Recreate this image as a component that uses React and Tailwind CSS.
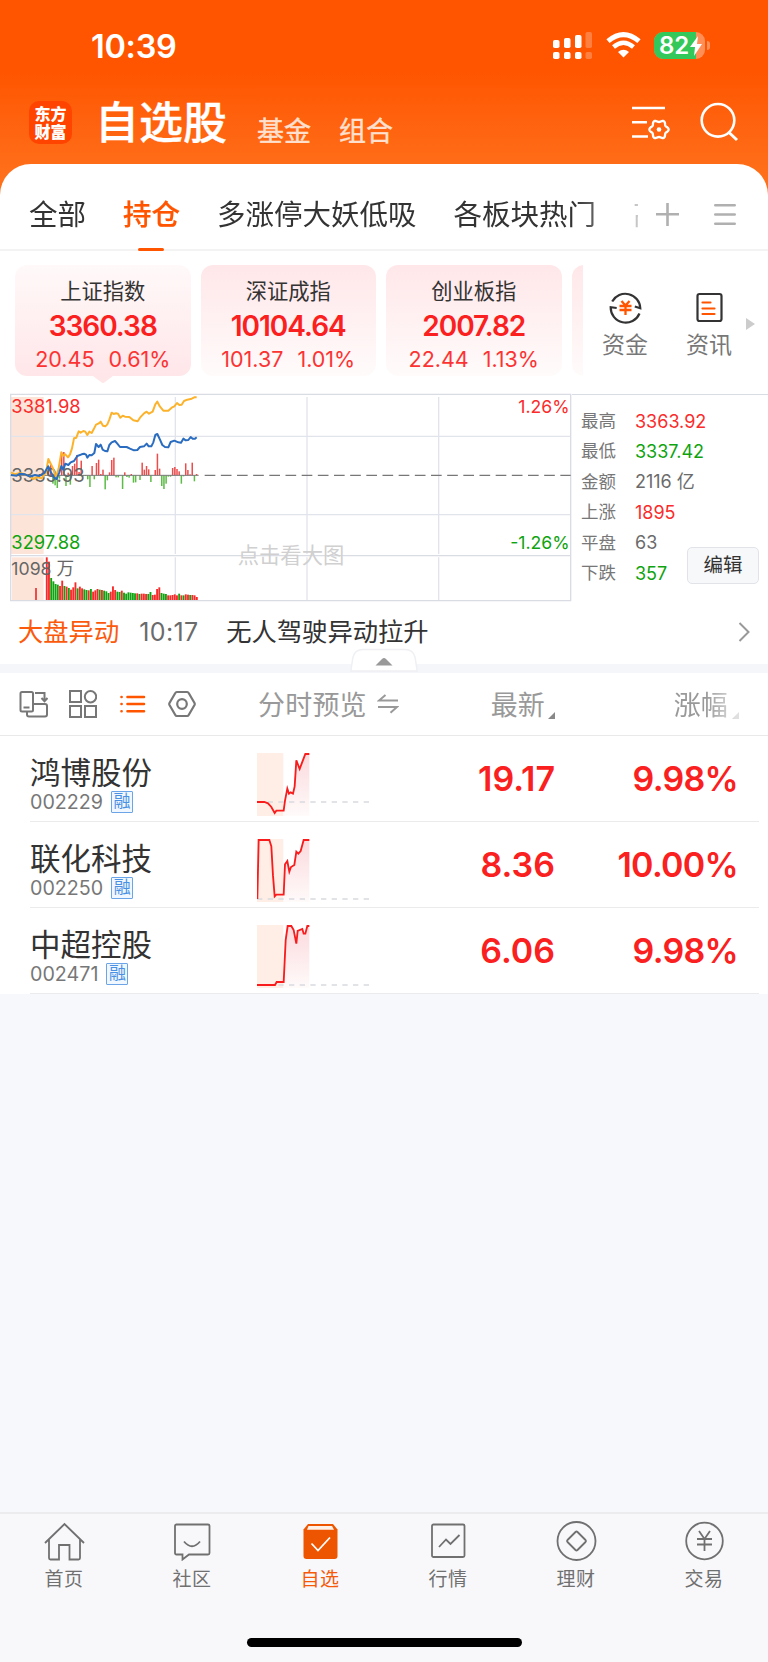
import React, { useState } from "react";

const groups = ["全部", "持仓", "多涨停大妖低吸", "各板块热门", "高股息"];

const indexes = [
  { name: "上证指数", value: "3360.38", change: "20.45", percent: "0.61%" },
  { name: "深证成指", value: "10104.64", change: "101.37", percent: "1.01%" },
  { name: "创业板指", value: "2007.82", change: "22.44", percent: "1.13%" },
];

const stats = [
  { label: "最高", value: "3363.92", color: "text-[#fb2b2b]" },
  { label: "最低", value: "3337.42", color: "text-[#0fa30f]" },
  { label: "金额", value: "2116 亿", color: "text-[#6b6b6b]" },
  { label: "上涨", value: "1895", color: "text-[#fb2b2b]" },
  { label: "平盘", value: "63", color: "text-[#6b6b6b]" },
  { label: "下跌", value: "357", color: "text-[#0fa30f]" },
];

const stocks = [
  {
    name: "鸿博股份",
    code: "002229",
    price: "19.17",
    percent: "9.98%",
    base: 147,
    line: "0,147 22,147 33,151 43,162 53,180 58,173 80,173 84,143 91,107 96,122 101,118 108,122 113,100 118,22 128,48 134,32 145,3 157,3",
    area: "80,173 84,143 91,107 96,122 101,118 108,122 113,100 118,22 128,48 134,32 145,3 157,3 157,188 80,188",
  },
  {
    name: "联化科技",
    code: "002250",
    price: "8.36",
    percent: "10.00%",
    base: 180,
    line: "1,180 5,3 37,3 43,22 48,110 53,172 58,167 80,167 84,76 91,66 97,98 102,84 112,78 118,38 124,44 131,36 140,3 157,3",
    area: "80,167 84,76 91,66 97,98 102,84 112,78 118,38 124,44 131,36 140,3 157,3 157,188 80,188",
  },
  {
    name: "中超控股",
    code: "002471",
    price: "6.06",
    percent: "9.98%",
    base: 180,
    line: "0,180 54,180 59,171 80,171 86,45 92,3 103,3 110,15 118,56 122,18 136,12 140,26 145,26 151,3 157,3",
    area: "80,171 86,45 92,3 103,3 110,15 118,56 122,18 136,12 140,26 145,26 151,3 157,3 157,188 80,188",
  },
];

const yellowLine =
  "33,262 45,268 60,264 75,268 90,275 100,282 112,276 125,280 133,268 138,262 145,222 158,248 168,276 176,250 184,202 190,212 196,208 204,217 210,208 216,190 222,160 229,158 236,139 242,143 250,138 256,140 262,150 268,140 275,144 281,133 288,119 295,116 302,110 309,122 316,124 322,118 328,104 335,83 341,87 348,85 354,86 361,98 368,92 375,95 388,96 400,106 413,109 420,98 432,85 440,80 447,86 458,80 466,58 472,50 480,65 490,77 505,77 515,68 523,64 531,54 538,60 545,59 552,48 562,44 575,41 583,37 590,37";
const blueLine =
  "33,270 50,272 60,266 75,268 90,275 105,270 118,273 133,264 145,244 152,260 162,278 170,282 178,262 184,243 190,254 196,236 205,240 212,232 222,228 232,213 245,208 252,206 258,209 262,218 268,210 275,211 283,204 288,177 296,186 302,179 308,194 315,198 322,199 328,180 335,172 345,168 352,176 360,186 380,186 390,191 402,196 412,195 420,186 432,184 440,176 446,184 454,184 460,172 466,150 472,147 480,164 487,180 495,186 505,187 512,171 523,167 535,172 543,173 550,161 557,166 565,165 572,156 578,161 585,161 590,157";

// minute momentum, positive is above the previous close
const momentum = [
  18, 32, -25, -30, -38, -10, 61, 70, -32, 8, -28, 28, 35, 61, 10, 44, -3, -2, -12, -35, 28, -12, 37, 47, 4, 17, -42,
  -15, 9, 46, 53, -6, -6, 0, -41, 9, -5, -7, 4, -22, -21, 0, -14, 38, 17, 28, 18, -20, 0, 16, 65, 20, -32, -41, -25,
  -4, -4, 22, 25, 19, 12, -25, -3, 36, 16, 3, 38, -18, 4,
];

// negative is drawn red
const volumes = [
  -128, -115, 66, 56, 48, 46, -42, -58, 42, -40, 36, -31, -38, -53, 35, -40, -35, 32, 30, -29, 33, -25, -29, -33, 31,
  -30, 28, 26, 21, -25, -41, -30, 25, 24, -28, 22, 19, 23, 22, 21, 20, -20, 18, -19, -19, -18, 18, 24, -15, -16, -33,
  -38, 21, 19, 18, -14, -14, -15, -17, -14, 19, -14, 14, -17, -16, 15, -15, -14, -9,
];

// six soft lobes round the centre
const gear = Array.from({ length: 72 }, (_, i) => {
  const a = (i * Math.PI) / 36;
  const r = 8.5 + 1.1 * Math.cos(6 * a);
  return `${27 + r * Math.cos(a)},${24.5 + r * Math.sin(a)}`;
}).join(" ");

const StatusBar = () => (
  <div className="h-[92px] flex justify-between items-start text-white pl-[91px] pr-[58px]">
    <span className="mt-[31px] text-[32.500px] leading-8 font-semibold tracking-[-0.3px]">10:39</span>
    <div className="flex mt-8">
      <svg width="39" height="27" viewBox="0 0 39 27" fill="white">
        <rect x="0" y="8" width="6.5" height="8" rx="1.8" />
        <rect x="11" y="6" width="6.5" height="10" rx="1.8" />
        <rect x="22" y="3" width="6.5" height="13" rx="1.8" />
        <rect x="32.500" y="0" width="6.5" height="16" rx="1.8" opacity=".25" />
        <rect x="0" y="20" width="6.5" height="7" rx="1.8" />
        <rect x="11" y="20" width="6.5" height="7" rx="1.8" />
        <rect x="22" y="20" width="6.5" height="7" rx="1.8" />
        <rect x="32.500" y="20" width="6.5" height="7" rx="1.8" opacity=".25" />
      </svg>
      <svg className="ml-[14px]" width="35" height="27" viewBox="0 0 35 27" fill="none" stroke="white">
        <path d="M2 9.200Q17.500-4 33 9.200" strokeWidth="5" />
        <path d="M7.500 15Q17.500 6.500 27.500 15" strokeWidth="4.500" />
        <path d="M17.500 25.500L12 20Q17.500 15.500 23 20Z" fill="white" stroke="none" />
      </svg>
      <div className="ml-[13px] relative w-[51px] h-[27px] rounded-[9px] bg-[#ff8f57] overflow-hidden">
        <div className="w-[42px] h-full bg-[#34c759]" />
        <span className="absolute left-[5px] top-0 text-[24px] leading-[27px] font-semibold">82</span>
        <svg className="absolute left-9 top-1" width="12" height="20" viewBox="0 0 12 20" fill="white">
          <path d="M8 0L0 11h5L4 20 12 8H7z" />
        </svg>
      </div>
      <div className="ml-[2px] mt-[9px] w-[3px] h-[9px] rounded-r-full bg-[#ff8f57]" />
    </div>
  </div>
);

const Header = () => (
  <div className="flex h-[72px] pl-[29px] pr-[29px] text-white">
    <div className="mt-[9px] w-[43px] h-[43px] rounded-[10px] bg-[#ff4400] flex flex-col items-center justify-center text-[16px] leading-[18px] font-black">
      <span>东方</span>
      <span>财富</span>
    </div>
    <h1 className="ml-[23px] mt-[8px] text-[44px] leading-[46px] font-medium [-webkit-text-stroke:0.3px_white]">自选股</h1>
    <span className="ml-[30px] mt-[25px] text-[27px] leading-[30px] text-[#ffe0cf] [-webkit-text-stroke:0.4px_#ffe0cf]">基金</span>
    <span className="ml-[28px] mt-[25px] text-[27px] leading-[30px] text-[#ffe0cf] [-webkit-text-stroke:0.4px_#ffe0cf]">组合</span>
    <svg className="ml-auto mt-[13px]" width="39" height="36" viewBox="0 0 39 36" fill="none" stroke="white" strokeWidth="2.600">
      <path d="M0 3h33M0 17.300h15M0 31.500h16" />
      <polygon points={gear} strokeWidth="2.300" strokeLinejoin="round" />
      <circle cx="27" cy="24.500" r="2.300" fill="white" stroke="none" />
    </svg>
    <svg className="ml-[29px] mt-[10px]" width="39" height="40" viewBox="0 0 39 40" fill="none" stroke="white" strokeWidth="2.600">
      <circle cx="18" cy="18.300" r="16.300" />
      <path d="M28.500 30l8.500 8" strokeWidth="3" />
    </svg>
  </div>
);

const GroupTabs = ({ active, onChange }) => (
  <div className="flex h-[87px] border-b-2 border-[#f3f3f4]">
    <div className="flex gap-[37px] w-[638px] h-[87px] pl-[29px] overflow-hidden whitespace-nowrap [mask-image:linear-gradient(to_right,black_575px,transparent_660px)]">
      {groups.map((g) => (
        <button
          key={g}
          onClick={() => onChange(g)}
          className={`relative shrink-0 pt-[35px] flex flex-col text-[28.500px] leading-8 ${
            active === g ? "text-[#ff5500] font-medium [-webkit-text-stroke:0.2px_#ff5500]" : "text-[#333]"
          }`}
        >
          {g}
          {active === g && <span className="absolute bottom-0 left-[15px] w-[26px] h-[3px] rounded bg-[#ff5500]" />}
        </button>
      ))}
    </div>
    <svg className="ml-[18px] mt-[38px] shrink-0" width="23" height="24" viewBox="0 0 23 24" stroke="#b0b0b0" strokeWidth="2.600">
      <path d="M0 12.300h23M11.500 1v23" />
    </svg>
    <svg className="ml-[35px] mt-[38px] shrink-0" width="22" height="24" viewBox="0 0 22 24" stroke="#b0b0b0" strokeWidth="2.600" strokeLinecap="round">
      <path d="M1.300 3.200h19.400M1.300 12.500h19.400M1.300 21.800h19.400" />
    </svg>
  </div>
);

const IndexCards = () => (
  <div className="flex h-[142px] pt-[14px] pl-[15px]">
    <div className="flex gap-[10px] w-[568px] h-[128px] overflow-hidden">
      {indexes.map((item, i) => (
        <div key={item.name} className="shrink-0 w-[175.500px]">
          <div
            className={`h-[111px] rounded-xl flex flex-col items-center ${
              i === 0 ? "bg-linear-to-b from-[#fff9f9] to-[#ffe6e9]" : "bg-linear-to-b from-[#ffe7e9] to-[#fffbfb]"
            }`}
          >
            <span className="mt-[13px] text-[21.300px] leading-[26px] text-[#333]">{item.name}</span>
            <span className="mt-[7px] text-[28px] leading-[30px] font-semibold tracking-[-1px] text-[#fb2020]">{item.value}</span>
            <div className="mt-[6px] flex gap-[14px] text-[21.500px] leading-6 text-[#fb3333]">
              <span>{item.change}</span>
              <span>{item.percent}</span>
            </div>
          </div>
          {i === 0 && (
            <svg className="mx-auto" width="20" height="7" viewBox="0 0 20 7">
              <path d="M0 0h20l-8 6q-2 2-4 0z" fill="#ffe6e9" />
            </svg>
          )}
        </div>
      ))}
      <div className="shrink-0 w-10 h-[111px] rounded-xl bg-linear-to-b from-[#ffe7e9] to-[#fffbfb]" />
    </div>
    <div className="ml-[18px] w-[48px] flex flex-col items-center">
      <svg className="mt-[26px]" width="33" height="33" viewBox="0 0 33 33" fill="none" stroke="#333" strokeWidth="2.200">
        <path d="M3.200 10.500A15 15 0 0 1 31.300 17.200L25.800 15.500" />
        <path d="M30.500 22.500A15 15 0 0 1 1.700 16.200L7.700 17" />
        <path d="M12.500 10l4 4.500 4-4.500M10.500 15h12M10.500 19h12M16.500 14.500V24" stroke="#ff5500" strokeWidth="2.300" />
      </svg>
      <span className="mt-[7px] text-[23px] leading-[28px] text-[#777] whitespace-nowrap">资金</span>
    </div>
    <div className="ml-[36px] w-[48px] flex flex-col items-center">
      <svg className="mt-[26px]" width="27" height="33" viewBox="0 0 27 33" fill="none" stroke="#333" strokeWidth="2.200">
        <rect x="1.500" y="3" width="24" height="27" rx="2" />
        <path d="M6.500 11.500h8M6.500 17.500h12M6.500 23h12" stroke="#ff5500" strokeWidth="2.200" strokeLinecap="round" />
      </svg>
      <span className="mt-[7px] text-[23px] leading-[28px] text-[#777] whitespace-nowrap">资讯</span>
    </div>
    <svg className="ml-[13px] mt-[53px]" width="9" height="12" viewBox="0 0 9 12" fill="#ccc">
      <path d="M0 0l9 6-9 6z" />
    </svg>
  </div>
);

const MarketChart = () => (
  <svg width="562" height="209" viewBox="30 24 1686 627" fill="none" fontSize="55">
    <rect x="33" y="36" width="98" height="471" fill="#fce5d8" />
    <rect x="36" y="517" width="95" height="128" fill="#fce5d8" />
    <g stroke="#e2e4ec" strokeWidth="4">
      <path d="M32 154H1712M32 389H1712M526 36V507M921 36V507M1316 36V507M526 517V646M921 517V646M1316 517V646" />
      <path d="M32 28H1712V647H32zM32 512H1712" stroke="#dadce3" />
    </g>
    <text x="873" y="534" fontSize="64" textAnchor="middle" className="fill-[#d0d0d0]">
      点击看大图
    </text>
    {momentum.map((m, i) => (
      <rect
        key={i}
        x={143.500 + i * 6.53}
        y={m > 0 ? 271 - m : 271}
        width="4.5"
        height={Math.abs(m)}
        fill={m > 0 ? "#ee4b4b" : "#5dbb46"}
      />
    ))}
    {volumes.map((v, i) => (
      <rect
        key={i}
        x={137.500 + i * 6.62}
        y={645 - Math.abs(v)}
        width="5.6"
        height={Math.abs(v)}
        fill={v < 0 ? "#fb2828" : "#0fa30f"}
      />
    ))}
    <rect x="105" y="609" width="6" height="36" fill="#ee4b4b" />
    <path d="M32 271H596" stroke="#777" strokeWidth="3" />
    <path d="M614 271H1712" stroke="#777" strokeWidth="4" strokeDasharray="32 16.500" />
    <g className="fill-[#666]">
      <text x="34" y="290" fontSize="55.500">3339.93</text>
      <text x="34" y="569" fontSize="53">1098 万</text>
    </g>
    <polyline points={yellowLine} stroke="#fcb32b" strokeWidth="6" strokeLinejoin="round" />
    <polyline points={blueLine} stroke="#2a6cc0" strokeWidth="6" strokeLinejoin="round" />
    <text x="34" y="84" className="fill-[#fb2b2b]">3381.98</text>
    <text x="34" y="492" className="fill-[#0fa30f]">3297.88</text>
    <text x="1709" y="84" fontSize="53" textAnchor="end" className="fill-[#fb2b2b]">1.26%</text>
    <text x="1709" y="492" fontSize="53" textAnchor="end" className="fill-[#0fa30f]">-1.26%</text>
  </svg>
);

const MarketPanel = () => (
  <div className="flex h-[209px] pl-[10px]">
    <MarketChart />
    <div className="relative flex-1 border-t border-[#dadce3] mt-[1px] pl-[9px] pt-[11px]">
      {stats.map((s) => (
        <div key={s.label} className="flex h-[30.400px] items-center text-[18px]">
          <span className="w-[54px] text-[17.500px] text-[#777]">{s.label}</span>
          <span className={s.color}>{s.value}</span>
        </div>
      ))}
      <button className="absolute right-[9px] top-[152px] w-[72px] h-[37px] rounded-[5px] border border-[#e1e3e9] bg-[#f7f8fa] text-[19.500px] text-[#333]">
        编辑
      </button>
    </div>
  </div>
);

const NewsBar = () => (
  <div className="relative h-[71px] border-b-[9px] border-[#f5f6fa] flex text-[25.300px] leading-[30px] pl-[18px] pt-[15px]">
    <span className="text-[#fb5a0c]">大盘异动</span>
    <span className="ml-5 text-[25px] text-[#6b6b6b] tracking-[0.4px] w-[87px]">10:17</span>
    <span className="text-[#333]">无人驾驶异动拉升</span>
    <svg className="ml-auto mr-[18px] mt-[5px]" width="12" height="20" viewBox="0 0 12 20" fill="none" stroke="#999" strokeWidth="2">
      <path d="M1.500 1l9 9-9 9" />
    </svg>
    <svg className="absolute left-[350px] top-[46px]" width="68" height="24" viewBox="0 0 68 24">
      <path d="M.8 23L3 9Q5 1.500 13 1.500H55Q63 1.500 65 9L67.200 23z" fill="white" stroke="#eff0f3" strokeWidth="1.500" />
      <path d="M25.500 17.500l6.500-6.500q2-2 4 0l6.500 6.500z" fill="#999" />
    </svg>
  </div>
);

const ListHeader = () => (
  <div className="flex items-center h-[63px] border-b border-[#e9e9ea] pl-[19px] text-[27px] text-[#999]">
    <svg width="29" height="28" viewBox="0 0 29 28" fill="none" stroke="#777" strokeWidth="2">
      <rect x="1.500" y="2" width="12.500" height="19.500" rx="1.500" />
      <path d="M4.500 17.500h6M16 3h9.500v8M22.500 8l3 3.200 3-3.200M8 22v2.500a2 2 0 0 0 2 2h16a2 2 0 0 0 2-2V16a2 2 0 0 0-2-2H14" />
    </svg>
    <svg className="ml-[21px]" width="28" height="28" viewBox="0 0 28 28" fill="none" stroke="#777" strokeWidth="2">
      <rect x="1" y="1" width="11" height="11" />
      <circle cx="21.500" cy="6.700" r="5.700" />
      <rect x="1" y="16" width="11" height="11" />
      <rect x="16" y="16" width="11" height="11" />
    </svg>
    <svg className="ml-[23px]" width="26" height="20" viewBox="0 0 26 20" stroke="#ff5500" strokeWidth="2.600" strokeLinecap="round">
      <path d="M7.500 3H24M7.500 10H24M7.500 17.200H24M1.500 3h.1M1.500 10h.1M1.500 17.200h.1" />
    </svg>
    <svg className="ml-[22px]" width="28" height="28" viewBox="0 0 28 28" fill="none" stroke="#777" strokeWidth="2.200">
      <path d="M8.800 2H19.200q1 0 1.500 1L26.500 13q.5 1 0 2L20.700 25q-.5 1-1.500 1H8.800q-1 0-1.500-1L1.500 15q-.5-1 0-2L7.300 3q.5-1 1.500-1z" />
      <circle cx="14" cy="14" r="4.800" />
    </svg>
    <span className="ml-[62px] mt-[4px] tracking-[0.2px]">分时预览</span>
    <svg className="ml-[10px]" width="22" height="20" viewBox="0 0 22 20" fill="none" stroke="#999" strokeWidth="2">
      <path d="M21 6.500H2L8.500 1M1 13H20L13.500 18.800" />
    </svg>
    <span className="ml-[92px] mt-[4px]">最新</span>
    <svg className="ml-[3px] mt-[22px]" width="7" height="7" viewBox="0 0 7 7" fill="#888">
      <path d="M7 0v7H0z" />
    </svg>
    <div className="ml-[119px] mt-[4px] flex items-center [mask-image:linear-gradient(to_right,black_32px,rgba(0,0,0,0.3)_62px)]">
      <span>涨幅</span>
      <svg className="ml-[4px] mt-[19px]" width="7" height="7" viewBox="0 0 7 7" fill="#999">
        <path d="M7 0v7H0z" />
      </svg>
    </div>
  </div>
);

const StockRow = ({ stock, index }) => (
  <div className="ml-[30px] mr-[9px] flex h-[86px] border-b border-[#ebebec]">
    <div className="w-[227px]">
      <p className="mt-[21px] text-[30.500px] leading-8 text-[#333]">{stock.name}</p>
      <div className="flex items-center h-6 mt-[1px]">
        <span className="text-[19.700px] leading-6 text-[#777]">{stock.code}</span>
        <span className="ml-2 w-[22px] h-[22px] border border-[#6ca4e8] bg-[#f0f7ff] text-[#4a90e2] text-[17px] leading-[19px] text-center rounded-[1px]">
          融
        </span>
      </div>
    </div>
    <svg className="mt-[17px]" width="115" height="64" viewBox="0 0 345 192" fill="none">
      <defs>
        <linearGradient id={`fade${index}`} x1="0" y1="0" x2="0" y2="1">
          <stop offset="0" stopColor="#fbdadd" />
          <stop offset="1" stopColor="#fffafa" />
        </linearGradient>
      </defs>
      <rect width="79" height="189" fill="#ffeee6" />
      <polygon points={stock.area} fill={`url(#fade${index})`} />
      <path d={`M0 ${stock.base}H345`} stroke="#d9dadf" strokeWidth="5" strokeDasharray="16 16" />
      <polyline points={stock.line} stroke="#f91c1c" strokeWidth="5.500" />
    </svg>
    <span className="ml-auto mt-[22px] text-[34px] leading-[42px] font-semibold text-[#fb2020]">{stock.price}</span>
    <span className="w-[183px] mr-[21px] mt-[22px] text-right text-[34px] leading-[42px] font-semibold tracking-[-0.7px] text-[#fb2020]">
      {stock.percent}
    </span>
  </div>
);

const navItems = [
  {
    label: "首页",
    icon: <path d="M1 21L20.500 2 40 21M5 17.500V36q0 1.500 1.500 1.500H15V23H25.500V37.500H34.500Q36 37.500 36 36V17.500" />,
  },
  {
    label: "社区",
    icon: <path d="M4 2.500H36q1.500 0 1.500 1.500V31q0 1.500-1.500 1.500H17L10.500 37.500V32.500H4.500q-1.500 0-1.500-1.500V4q0-1.500 1.500-1.500M12 19.500q8 9.500 16 0" />,
  },
  {
    label: "自选",
    icon: (
      <>
        <path d="M8 2H33L37.500 7.500V34Q37.500 37 34.500 37H6.500Q3.500 37 3.500 34V7.500z" fill="#ee5500" stroke="none" />
        <path d="M8.500 4H32L34 7.700H7z" fill="#fff1e8" stroke="none" />
        <path d="M11.500 21.500l6.500 7 12-13" stroke="#fff" />
      </>
    ),
  },
  {
    label: "行情",
    icon: (
      <>
        <rect x="4" y="2.500" width="32.500" height="32.500" rx="1.500" />
        <path d="M11 25l7-7.500 4.500 4.500 9-9" />
      </>
    ),
  },
  {
    label: "理财",
    icon: (
      <>
        <circle cx="20.500" cy="19" r="19" />
        <path d="M19.500 10q1-1 2 0l8 8q1 1 0 2l-8 8q-1 1-2 0l-8-8q-1-1 0-2z" />
      </>
    ),
  },
  {
    label: "交易",
    icon: (
      <>
        <circle cx="20.500" cy="19" r="18.300" />
        <path d="M15 9l5.500 8 5.500-8M13 17h15M13 22.500h15M20.500 17v12" />
      </>
    ),
  },
];

const BottomNav = () => (
  <div className="h-[150px] border-t-2 border-[#ececef] bg-[#f8f8fb]">
    <div className="grid grid-cols-6">
      {navItems.map((item) => (
        <button
          key={item.label}
          className={`flex flex-col items-center pt-[7px] ${item.label === "自选" ? "text-[#f55a0a]" : "text-[#707070]"}`}
        >
          <svg width="41" height="40" viewBox="0 -1 41 40" fill="none" stroke="currentColor" strokeWidth="1.800">
            {item.icon}
          </svg>
          <span className="mt-[7px] text-[19px] leading-6 tracking-[0.6px]">{item.label}</span>
        </button>
      ))}
    </div>
    <div className="mx-auto mt-[46px] w-[275px] h-[9px] rounded-full bg-black" />
  </div>
);

const App = () => {
  const [group, setGroup] = useState("持仓");

  return (
    <div className="w-[768px] h-[1662px] overflow-hidden flex flex-col bg-[#f7f8fb] font-['Inter','Noto_Sans_CJK_SC',sans-serif]">
      <div className="bg-linear-to-b from-[#ff5500] from-[72px] to-[#ff701a] to-[180px]">
        <StatusBar />
        <Header />
        <div className="bg-white rounded-t-[31px]">
          <GroupTabs active={group} onChange={setGroup} />
        </div>
      </div>
      <div className="bg-white">
        <IndexCards />
        <MarketPanel />
        <NewsBar />
        <ListHeader />
        {stocks.map((s, i) => (
          <StockRow key={s.code} stock={s} index={i} />
        ))}
      </div>
      <div className="flex-1" />
      <BottomNav />
    </div>
  );
};

export default App;
